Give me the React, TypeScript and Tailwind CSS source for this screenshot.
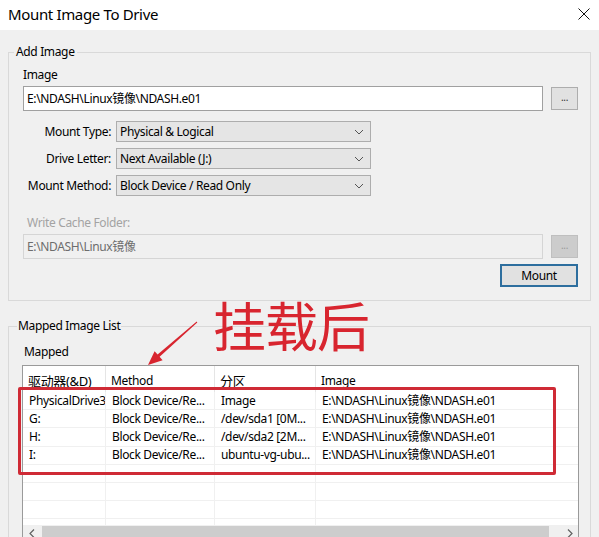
import React from 'react';

const font = { fontFamily: '"Noto Sans", "Noto Sans CJK SC", sans-serif', letterSpacing: '-0.35px' };

function Chevron() {
    return (
        <svg width="10" height="6" viewBox="0 0 10 6" className="shrink-0">
            <path d="M1 1 L5 5 L9 1" fill="none" stroke="#555" strokeWidth="1" />
        </svg>
    );
}

function SelectRow({ label, value }: { label: string; value: string }) {
    return (
        <div className="flex items-center">
            <div className="w-[88px] text-right text-black">{label}</div>
            <div className="ml-[5px] w-[255px] h-[21px] bg-[#e5e5e5] border border-[#adadad] flex items-center justify-between pl-[3px] pr-[6px]">
                <span>{value}</span>
                <Chevron />
            </div>
        </div>
    );
}

const rows = [
    ['PhysicalDrive3', 'Block Device/Re...', 'Image', 'E:\\NDASH\\Linux镜像\\NDASH.e01'],
    ['G:', 'Block Device/Re...', '/dev/sda1 [0M...', 'E:\\NDASH\\Linux镜像\\NDASH.e01'],
    ['H:', 'Block Device/Re...', '/dev/sda2 [2M...', 'E:\\NDASH\\Linux镜像\\NDASH.e01'],
    ['I:', 'Block Device/Re...', 'ubuntu-vg-ubu...', 'E:\\NDASH\\Linux镜像\\NDASH.e01'],
    ['', '', '', ''],
    ['', '', '', ''],
    ['', '', '', ''],
    ['', '', '', ''],
];

const cols = ['w-[83px]', 'w-[109px]', 'w-[101px]', 'flex-1'];

export default function App() {
    return (
        <div className="relative w-[599px] h-[537px] overflow-hidden bg-[#f0f0f0] text-[12px] leading-[16px] text-black" style={font}>
            {/* Title bar */}
            <div className="h-[30px] bg-white flex items-center justify-between pl-[8px] pr-[9px] pb-[3px]">
                <span className="text-[15px]">Mount Image To Drive</span>
                <svg width="12" height="12" viewBox="0 0 12 12">
                    <path d="M0.5 0.5 L11.5 11.5 M11.5 0.5 L0.5 11.5" stroke="#111" strokeWidth="1" />
                </svg>
            </div>

            <div className="px-[8px]">
                {/* Add Image */}
                <fieldset className="mt-[14px] border border-[#d9d9d9] pl-[14px] pr-[12px] pb-[13px]">
                    <legend className="ml-[-9px] px-[2px]">Add Image</legend>
                    <div className="pt-[7px]">Image</div>
                    <div className="mt-[3px] flex items-center">
                        <div className="flex-1 h-[25px] bg-white border border-[#a0a0a0] flex items-center pl-[3px]">
                            E:\NDASH\Linux镜像\NDASH.e01
                        </div>
                        <div className="ml-[8px] w-[27px] h-[23px] bg-[#e1e1e1] border border-[#adadad] flex items-center justify-center text-[10px] text-[#333] pb-[3px]">...</div>
                    </div>

                    <div className="mt-[10px] flex flex-col gap-[6px]">
                        <SelectRow label="Mount Type:" value="Physical & Logical" />
                        <SelectRow label="Drive Letter:" value="Next Available (J:)" />
                        <SelectRow label="Mount Method:" value="Block Device / Read Only" />
                    </div>

                    <div className="mt-[19px] pl-[4px] text-[#a3a3a3]">Write Cache Folder:</div>
                    <div className="mt-[3px] flex items-center">
                        <div className="flex-1 h-[25px] bg-[#f0f0f0] border border-[#d5d5d5] flex items-center pl-[3px] text-[#6d6d6d]">
                            E:\NDASH\Linux镜像
                        </div>
                        <div className="ml-[8px] w-[27px] h-[23px] bg-[#cccccc] border border-[#bfbfbf] flex items-center justify-center text-[10px] text-[#9a9a9a] pb-[3px]">...</div>
                    </div>
                    <div className="mt-[5px] flex justify-end">
                        <div className="w-[78px] h-[23px] bg-[#e1e1e1] border-2 border-[#2d6e9e] flex items-center justify-center">Mount</div>
                    </div>
                </fieldset>

                {/* Mapped Image List */}
                <fieldset className="mt-[17px] border border-[#d9d9d9] pl-[13px] pr-[11px] h-[260px]">
                    <legend className="ml-[-5px] px-[1px]">Mapped Image List</legend>
                    <div className="pt-[10px] pl-[2px]">Mapped</div>
                    <div className="mt-[5px] h-[178px] bg-white border border-[#9a9a9a] flex flex-col overflow-hidden">
                        <div className="h-[26px] flex shrink-0">
                            {['驱动器(&D)', 'Method', '分区', 'Image'].map((h, i) => (
                                <div key={i} className={`${cols[i]} h-full flex items-center pl-[5px] pt-[4px] ${i < 3 ? 'border-r border-[#e5e5e5]' : ''}`}>
                                    <span className={i === 0 || i === 2 ? 'text-[13px]' : ''}>{h}</span>
                                </div>
                            ))}
                        </div>
                        <div className="flex-1 overflow-hidden">
                            {rows.map((r, ri) => (
                                <div key={ri} className="h-[18.2px] flex border-b border-[#f0f0f0]">
                                    {r.map((c, ci) => (
                                        <div key={ci} className={`${cols[ci]} h-full flex items-center pl-[6px] whitespace-nowrap overflow-hidden ${ci < 3 ? 'border-r border-[#f0f0f0]' : ''}`}>
                                            {c}
                                        </div>
                                    ))}
                                </div>
                            ))}
                        </div>
                        <div className="h-[17px] shrink-0 bg-[#f0f0f0] flex items-center">
                            <div className="w-[17px] flex justify-center">
                                <svg width="6" height="9" viewBox="0 0 6 9"><path d="M5 0.5 L1 4.5 L5 8.5" fill="none" stroke="#606060" strokeWidth="1.2" /></svg>
                            </div>
                            <div className="flex-1 h-[15px] bg-[#cdcdcd] mr-[12px] ml-[2px]" />
                            <div className="w-[17px] flex justify-center">
                                <svg width="6" height="9" viewBox="0 0 6 9"><path d="M1 0.5 L5 4.5 L1 8.5" fill="none" stroke="#606060" strokeWidth="1.2" /></svg>
                            </div>
                        </div>
                    </div>
                </fieldset>
            </div>

            {/* Annotation */}
            <div className="absolute left-[18px] top-[387px] w-[538px] h-[88px] border-[3px] border-[#cf2a35] rounded-[2px]" />
            <div className="absolute left-[213px] top-[297px] text-[53px] leading-[54px] text-[#d8252f] whitespace-nowrap" style={{ fontFamily: '"Noto Sans CJK SC", sans-serif', letterSpacing: '-1px' }}>
                挂载后
            </div>
            <svg className="absolute left-0 top-0" width="599" height="537" viewBox="0 0 599 537">
                <polygon
                    points="197.3,322.4 159.6,356.8 162.6,360.3 148,365 154.6,351.2 157.6,354.6 196.7,321.6"
                    fill="#d8252f"
                />
            </svg>
        </div>
    );
}
